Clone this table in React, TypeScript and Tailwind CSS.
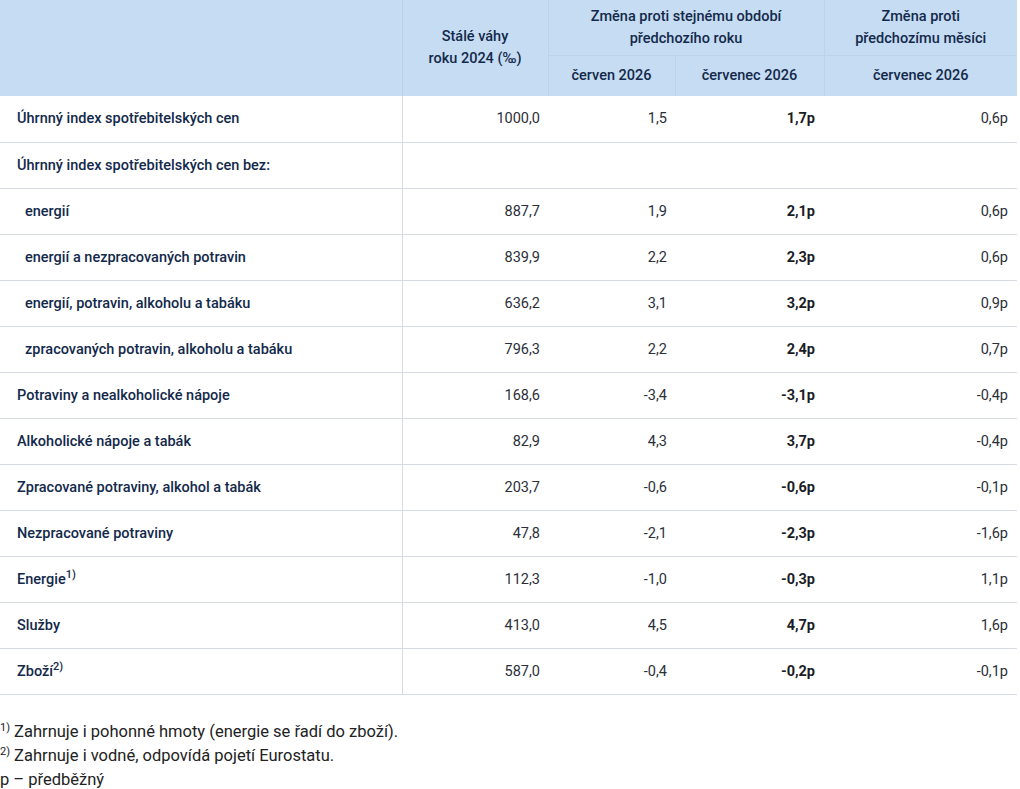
import React from "react";

type Row = {
  label: string;
  sup?: string;
  indent?: boolean;
  weight?: string;
  jun?: string;
  jul?: string;
  mom?: string;
};

const rows: Row[] = [
  { label: "Úhrnný index spotřebitelských cen", weight: "1000,0", jun: "1,5", jul: "1,7p", mom: "0,6p" },
  { label: "Úhrnný index spotřebitelských cen bez:" },
  { label: "energií", indent: true, weight: "887,7", jun: "1,9", jul: "2,1p", mom: "0,6p" },
  { label: "energií a nezpracovaných potravin", indent: true, weight: "839,9", jun: "2,2", jul: "2,3p", mom: "0,6p" },
  { label: "energií, potravin, alkoholu a tabáku", indent: true, weight: "636,2", jun: "3,1", jul: "3,2p", mom: "0,9p" },
  { label: "zpracovaných potravin, alkoholu a tabáku", indent: true, weight: "796,3", jun: "2,2", jul: "2,4p", mom: "0,7p" },
  { label: "Potraviny a nealkoholické nápoje", weight: "168,6", jun: "-3,4", jul: "-3,1p", mom: "-0,4p" },
  { label: "Alkoholické nápoje a tabák", weight: "82,9", jun: "4,3", jul: "3,7p", mom: "-0,4p" },
  { label: "Zpracované potraviny, alkohol a tabák", weight: "203,7", jun: "-0,6", jul: "-0,6p", mom: "-0,1p" },
  { label: "Nezpracované potraviny", weight: "47,8", jun: "-2,1", jul: "-2,3p", mom: "-1,6p" },
  { label: "Energie", sup: "1)", weight: "112,3", jun: "-1,0", jul: "-0,3p", mom: "1,1p" },
  { label: "Služby", weight: "413,0", jun: "4,5", jul: "4,7p", mom: "1,6p" },
  { label: "Zboží", sup: "2)", weight: "587,0", jun: "-0,4", jul: "-0,2p", mom: "-0,1p" },
];

export default function App() {
  return (
    <div className="bg-white w-[1020px] min-h-[789px] font-['Roboto',sans-serif]">
      <table className="table-fixed w-[1017px] border-collapse text-[14.5px]">
        <colgroup>
          <col className="w-[402px]" />
          <col className="w-[146px]" />
          <col className="w-[127px]" />
          <col className="w-[149px]" />
          <col className="w-[193px]" />
        </colgroup>
        <thead className="bg-[#c6dcf2] text-[#13294b] font-medium leading-[22px]">
          <tr className="h-[55px]">
            <th rowSpan={2} className="border-r border-[#bdd3ea]"></th>
            <th rowSpan={2} className="border-r border-[#bdd3ea] text-center align-middle font-medium">
              Stálé váhy
              <br />
              roku 2024 (‰)
            </th>
            <th colSpan={2} className="border-r border-b border-[#bdd3ea] text-center font-medium pt-[1px]">
              Změna proti stejnému období
              <br />
              předchozího roku
            </th>
            <th className="border-b border-[#bdd3ea] text-center font-medium pt-[1px]">
              Změna proti
              <br />
              předchozímu měsíci
            </th>
          </tr>
          <tr className="h-[41px]">
            <th className="border-r border-[#bdd3ea] text-center font-medium pt-[1px]">červen 2026</th>
            <th className="border-r border-[#bdd3ea] text-center font-medium pt-[1px]">červenec 2026</th>
            <th className="text-center font-medium pt-[1px]">červenec 2026</th>
          </tr>
        </thead>
        <tbody>
          {rows.map((r, i) => (
            <tr key={i} className="h-[46px] border-b border-[#d6dae3]">
              <td
                className={`border-r border-[#d6dae3] font-medium text-[#13294b] pt-[1px] ${
                  r.indent ? "pl-[25px]" : "pl-[17px]"
                }`}
              >
                {r.label}
                {r.sup && <sup className="text-[11px]">{r.sup}</sup>}
              </td>
              <td className="text-right pr-[8px] pt-[1px] text-[#2b2f3a]">{r.weight}</td>
              <td className="text-right pr-[8px] pt-[1px] text-[#2b2f3a]">{r.jun}</td>
              <td className="text-right pr-[9px] pt-[1px] font-bold text-[#1b1d26]">{r.jul}</td>
              <td className="text-right pr-[9px] pt-[1px] text-[#2b2f3a]">{r.mom}</td>
            </tr>
          ))}
        </tbody>
      </table>
      <div className="pt-[25px] text-[16.5px] leading-[24px] text-[#222]">
        <div>
          <sup className="text-[11px]">1)</sup> Zahrnuje i pohonné hmoty (energie se řadí do zboží).
        </div>
        <div>
          <sup className="text-[11px]">2)</sup> Zahrnuje i vodné, odpovídá pojetí Eurostatu.
        </div>
        <div>p – předběžný</div>
      </div>
    </div>
  );
}
